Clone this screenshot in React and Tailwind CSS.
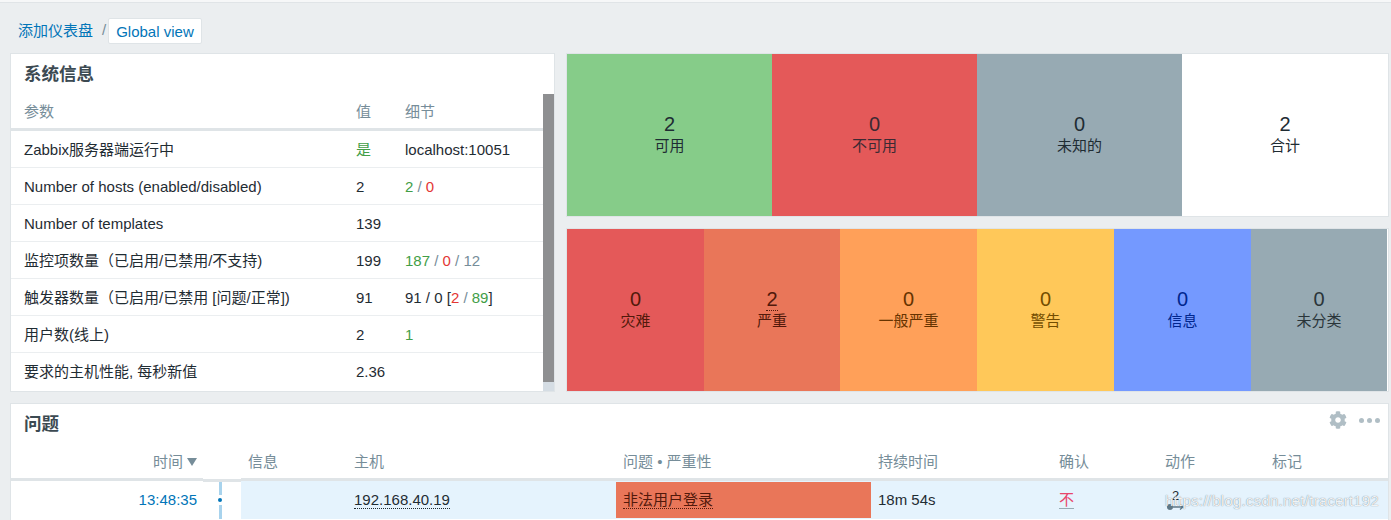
import { FaCog } from 'react-icons/fa';

const font = { cjk: "font-['Liberation_Sans','Noto_Sans_CJK_SC',sans-serif]" };

const sysRows = [
  { param: 'Zabbix服务器端运行中', value: <span className="text-[#429e47]">是</span>, detail: 'localhost:10051' },
  {
    param: 'Number of hosts (enabled/disabled)',
    value: '2',
    detail: (
      <>
        <span className="text-[#429e47]">2</span> <span className="text-[#768d99]">/</span> <span className="text-[#e33734]">0</span>
      </>
    ),
  },
  { param: 'Number of templates', value: '139', detail: '' },
  {
    param: '监控项数量（已启用/已禁用/不支持)',
    value: '199',
    detail: (
      <>
        <span className="text-[#429e47]">187</span> <span className="text-[#768d99]">/</span> <span className="text-[#e33734]">0</span> <span className="text-[#768d99]">/ 12</span>
      </>
    ),
  },
  {
    param: '触发器数量（已启用/已禁用 [问题/正常])',
    value: '91',
    detail: (
      <>
        91 / 0 [<span className="text-[#e33734]">2</span> <span className="text-[#768d99]">/</span> <span className="text-[#429e47]">89</span>]
      </>
    ),
  },
  { param: '用户数(线上)', value: '2', detail: <span className="text-[#429e47]">1</span> },
  { param: '要求的主机性能, 每秒新值', value: '2.36', detail: '' },
];

const hostTiles = [
  { count: 2, label: '可用', cls: 'w-[205px] bg-[#86cc89] text-[#1f2c33]' },
  { count: 0, label: '不可用', cls: 'w-[205px] bg-[#e45959] text-[#3b2a33]' },
  { count: 0, label: '未知的', cls: 'w-[205px] bg-[#97aab3] text-[#1f2c33]' },
  { count: 2, label: '合计', cls: 'flex-1 bg-white text-[#1f2c33]' },
];

const severityTiles = [
  { count: 0, label: '灾难', cls: 'w-[137px] bg-[#e45959] text-[#52190b]' },
  { count: 2, label: '严重', cls: 'w-[136px] bg-[#e97659] text-[#52190b]', dotted: true },
  { count: 0, label: '一般严重', cls: 'w-[137px] bg-[#ffa059] text-[#663300]' },
  { count: 0, label: '警告', cls: 'w-[137px] bg-[#ffc859] text-[#734d00]' },
  { count: 0, label: '信息', cls: 'w-[137px] bg-[#7499ff] text-[#00268e]' },
  { count: 0, label: '未分类', cls: 'flex-1 bg-[#97aab3] text-[#2a353a]' },
];

const Tile = ({ count, label, cls, dotted }) => (
  <div className={`flex flex-col items-center justify-center pb-[1px] ${cls}`}>
    <div className="text-[20px] leading-[22px]">
      <span className={dotted ? 'border-b border-dotted border-current' : ''}>{count}</span>
    </div>
    <div className="text-[15px] leading-[21px]">{label}</div>
  </div>
);

export default function App() {
  return (
    <div className={`h-[520px] w-[1391px] overflow-hidden bg-[#ebeef0] text-[15px] text-[#1f2c33] ${font.cjk}`}>
      <div className="h-[3px] bg-[#f6f7f8] border-b border-[#e0e4e7]" />

      <div className="h-[50px] pl-[18px] pt-[15px] flex items-start">
        <a className="text-[#0275b8] leading-[26px]">添加仪表盘</a>
        <span className="text-[#768d99] ml-[9px] mr-[2px] leading-[24px]">/</span>
        <div className="h-[26px] px-[7px] leading-[25px] bg-white text-[#0275b8] border border-[#dfe4e7] rounded-[2px]">Global view</div>
      </div>

      <div className="flex pl-[10px] pr-[2px] gap-[11px] h-[339px]">
        <div className="w-[545px] bg-white border border-[#dfe4e7] flex flex-col">
          <h4 className="h-[40px] pl-[13px] pt-[8px] text-[17.5px] leading-[24px] font-bold text-[#3c4a52]">系统信息</h4>
          <div className="flex flex-1">
            <div className="flex-1">
              <div className="h-[37px] border-b-[3px] border-[#dfe4e7] pl-[13px] flex items-center text-[#768d99] pt-[2px]">
                <div className="w-[332px]">参数</div>
                <div className="w-[49px]">值</div>
                <div>细节</div>
              </div>
              {sysRows.map((row) => (
                <div key={row.param} className="h-[37px] border-b border-[#ebeef0] last:border-b-0 pl-[13px] pt-[2px] flex items-center">
                  <div className="w-[332px] whitespace-nowrap">{row.param}</div>
                  <div className="w-[49px]">{row.value}</div>
                  <div className="whitespace-pre">{row.detail}</div>
                </div>
              ))}
            </div>
            <div className="w-[11px] bg-[#d5dde4] flex flex-col">
              <div className="h-[288px] bg-[#8e8f91]" />
            </div>
          </div>
        </div>

        <div className="flex-1 flex flex-col gap-[11px]">
          <div className="h-[164px] flex bg-white border border-[#dfe4e7]">
            {hostTiles.map((t) => (
              <Tile key={t.label} {...t} />
            ))}
          </div>
          <div className="h-[164px] flex bg-white border border-[#dfe4e7] pr-[1px]">
            {severityTiles.map((t) => (
              <Tile key={t.label} {...t} />
            ))}
          </div>
        </div>
      </div>

      <div className="relative mt-[11px] ml-[10px] mr-[2px] h-[130px] bg-white border border-[#dfe4e7]">
        <div className="h-[40px] pl-[13px] pt-[8px] flex">
          <h4 className="text-[17.5px] leading-[24px] font-bold text-[#3c4a52]">问题</h4>
          <div className="ml-auto mr-[8px] -mt-[1px] flex items-start gap-[12px] text-[#b0bec5]">
            <FaCog className="w-[18px] h-[18px]" />
            <div className="flex gap-[3px] mt-[7px]">
              <span className="w-[5px] h-[5px] rounded-full bg-[#b0bec5]" />
              <span className="w-[5px] h-[5px] rounded-full bg-[#b0bec5]" />
              <span className="w-[5px] h-[5px] rounded-full bg-[#b0bec5]" />
            </div>
          </div>
        </div>

        <div className="h-[37px] flex items-center text-[#768d99] border-b-[3px] border-[#dfe4e7] pt-[2px]">
          <div className="w-[186px] flex justify-end items-center gap-[4px]">
            时间
            <span className="w-0 h-0 border-x-[5px] border-x-transparent border-t-[8px] border-t-[#768d99]" />
          </div>
          <div className="w-[51px]" />
          <div className="w-[106px]">信息</div>
          <div className="w-[269px]">主机</div>
          <div className="w-[255px]">问题 • 严重性</div>
          <div className="w-[181px]">持续时间</div>
          <div className="w-[106px]">确认</div>
          <div className="w-[107px]">动作</div>
          <div>标记</div>
        </div>
        {/* notch in the header rule above the timeline column */}
        <div className="absolute left-[192px] top-[74px] w-[38px] h-[1px] bg-white" />
        <div className="absolute left-[192px] top-[77px] w-[38px] h-[1px] bg-[#dfe4e7]" />

        <div className="h-[38px] flex items-stretch">
          <div className="w-[186px] flex items-center justify-end text-[#0275b8]">13:48:35</div>
          <div className="w-[44px] relative pl-[22px] flex flex-col">
            <div className="w-[3px] h-[13px] mt-[1px] bg-[#a8d3ed]" />
            <div className="w-[3px] h-[14px] mt-[10px] bg-[#a8d3ed]" />
            <span className="absolute left-[21px] top-[17px] w-[4px] h-[4px] rounded-full bg-[#0275b8]" />
          </div>
          <div className="flex-1 bg-[#e5f3fd] flex items-stretch">
            <div className="w-[113px]" />
            <div className="w-[262px] flex items-center">
              <span className="border-b border-dotted border-[#1f2c33] leading-[16px]">192.168.40.19</span>
            </div>
            <div className="w-[255px] my-[1px] bg-[#e97659] flex items-center pl-[7px] text-[#52190b]">
              <span className="border-b border-dotted border-[#52190b] leading-[17px]">非法用户登录</span>
            </div>
            <div className="w-[188px] flex items-center pl-[7px]">18m 54s</div>
            <div className="w-[106px] flex items-center">
              <span className="text-[#e8456b] border-b border-[#97aab3] leading-[17px]">不</span>
            </div>
            <div className="relative">
              <span className="absolute left-[7px] top-[8px] text-[13px] leading-[14px]">2</span>
              <svg className="absolute left-0 top-[20px]" width="20" height="12" viewBox="0 0 20 12">
                <circle cx="5" cy="6" r="3" fill="#5f7886" />
                <path d="M8 6h10M15 3.5 18 6l-3 2.5" fill="none" stroke="#5f7886" strokeWidth="1.3" />
              </svg>
            </div>
          </div>
        </div>

        <span className="absolute left-[1154px] top-[87px] text-[15px] leading-[20px] tracking-[0.25px] text-white/90 [text-shadow:0_0_1px_rgba(70,90,105,0.9)]">
          https://blog.csdn.net/tracert192
        </span>
      </div>
    </div>
  );
}
